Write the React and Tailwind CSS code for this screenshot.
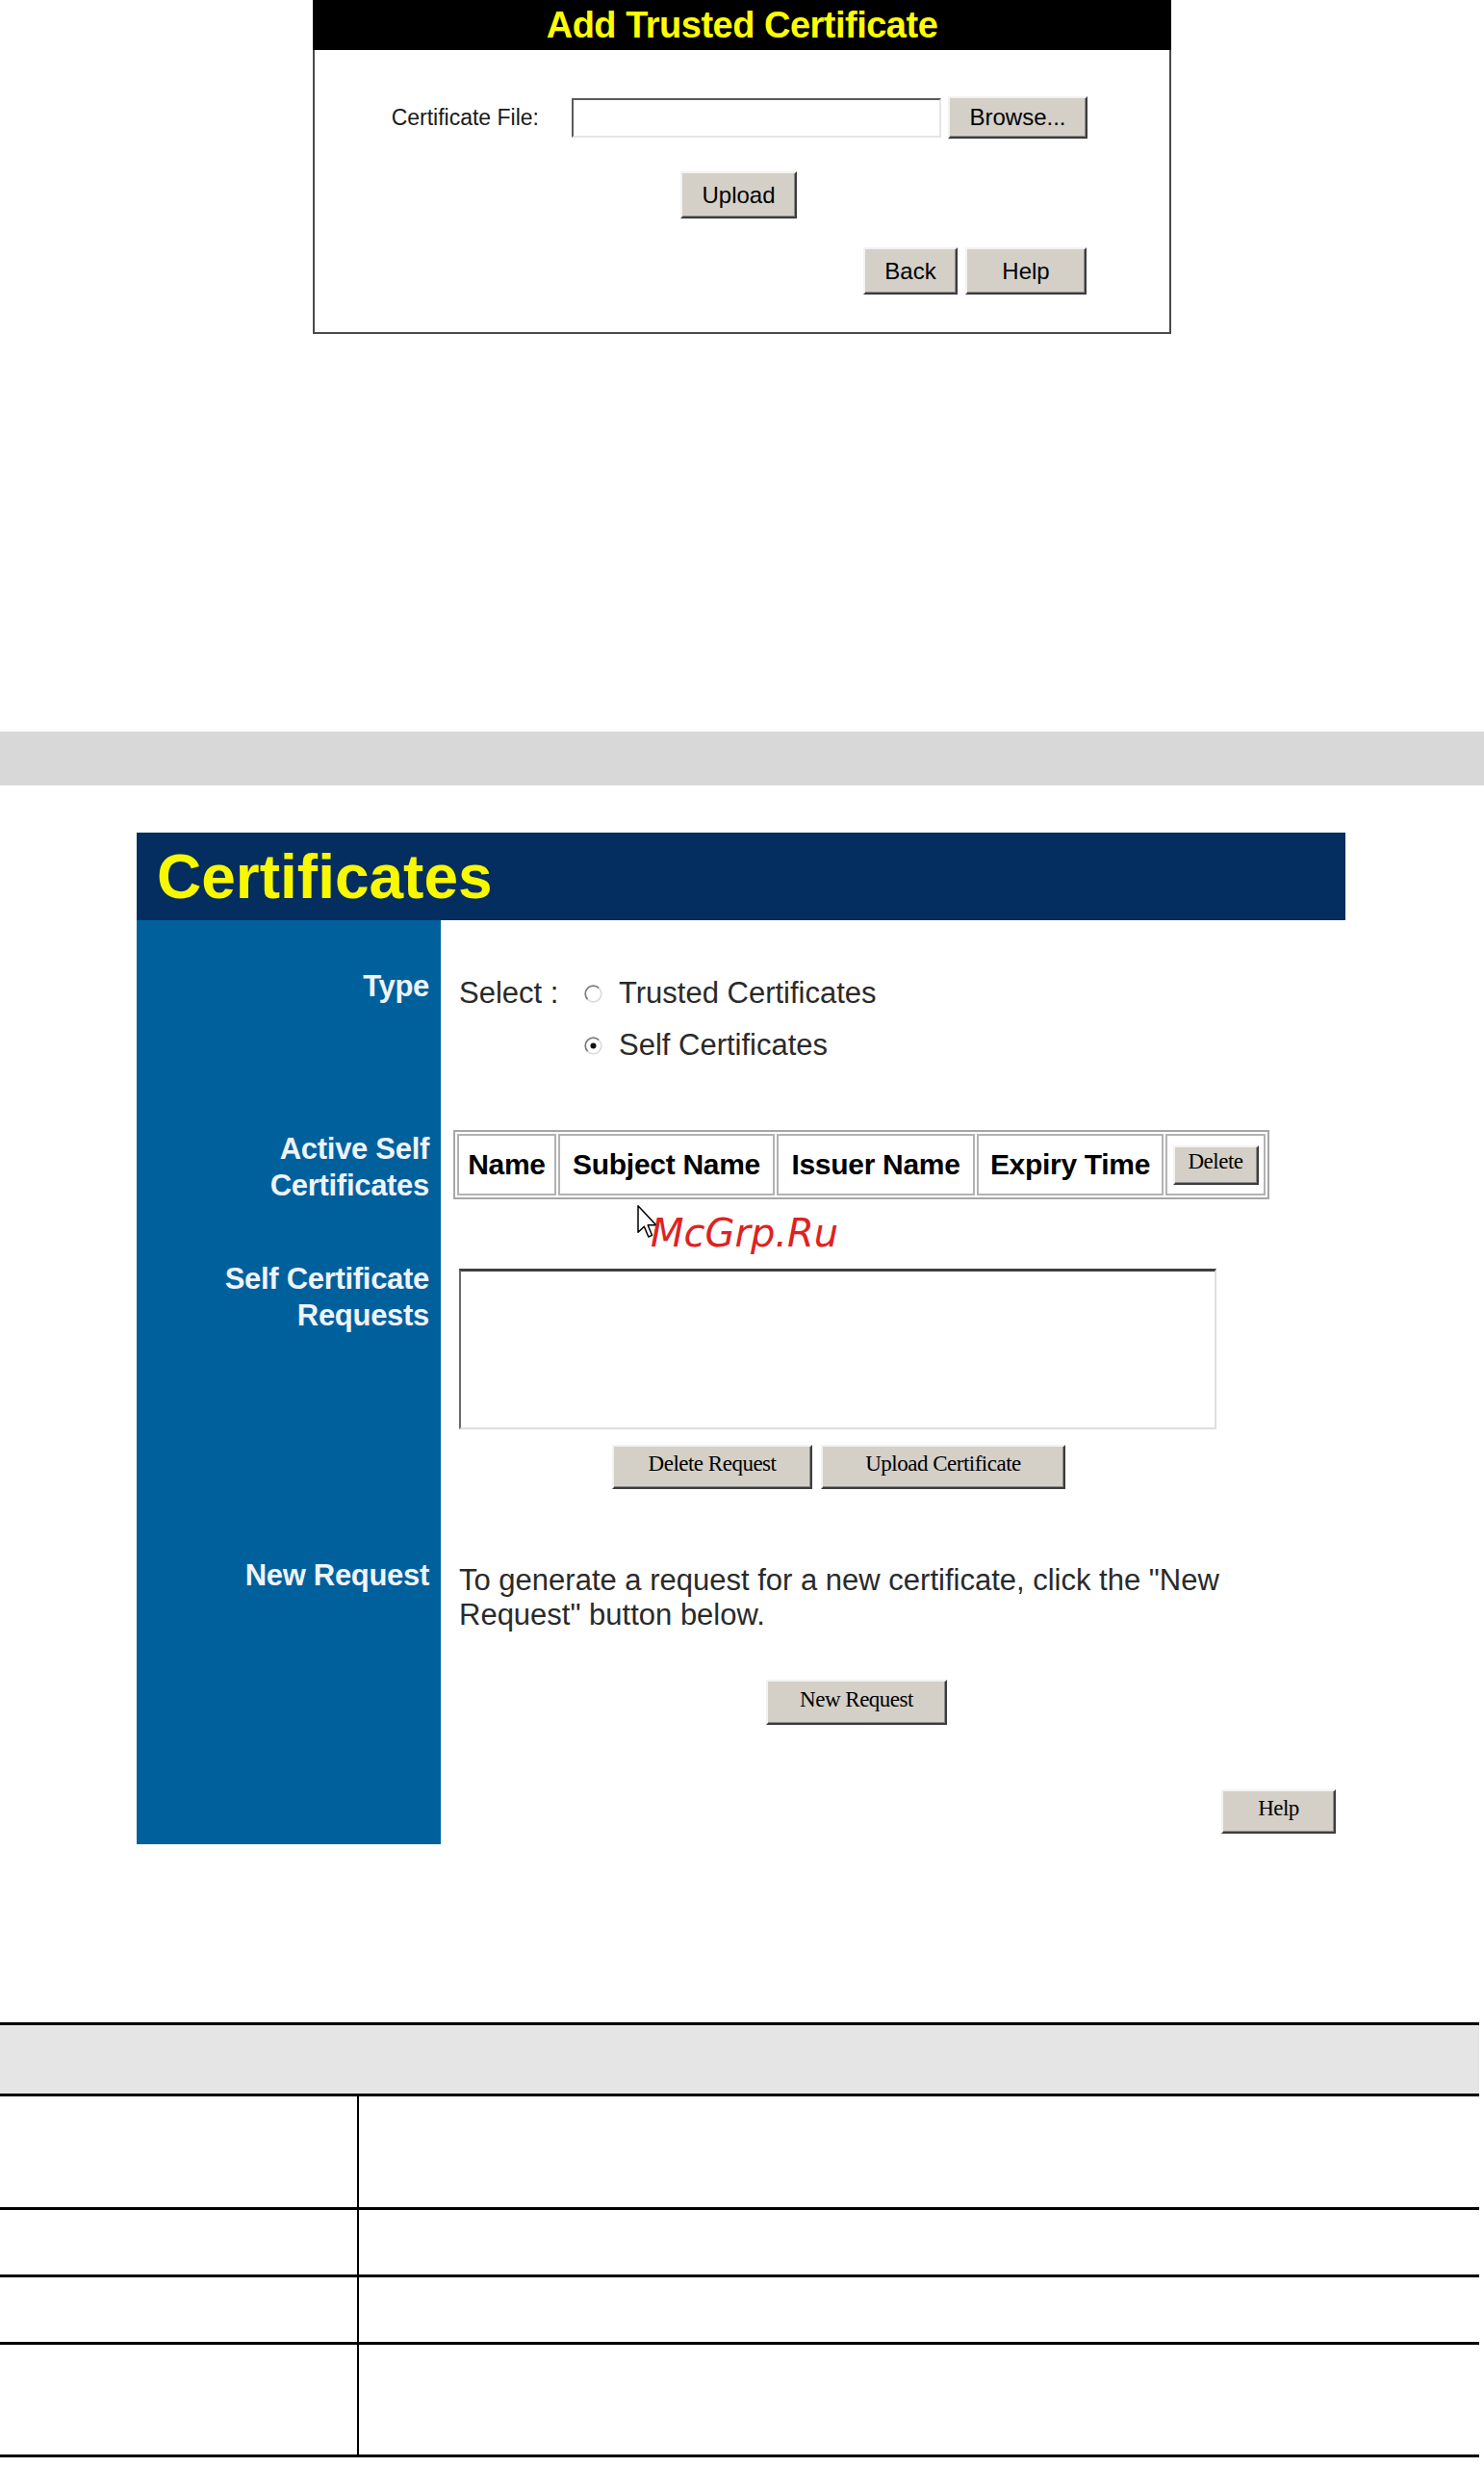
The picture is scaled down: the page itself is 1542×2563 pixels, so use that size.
import clsx from "clsx";

const sans = "font-['Liberation_Sans',Arial,sans-serif]";

function WinButton({ className, serif, children }) {
  return (
    <button
      type="button"
      className={clsx(
        "flex items-center justify-center bg-[#d4d0c8] text-black border-2 border-t-[#f2f2f2] border-l-[#f2f2f2] border-b-[#3c3c3c] border-r-[#3c3c3c] shadow-[inset_-1px_-1px_0_#8a8a8a]",
        serif
          ? "font-['Liberation_Serif','Times_New_Roman',serif] text-[23px] tracking-[-0.5px] pb-[6px]"
          : "font-['Liberation_Sans',Arial,sans-serif] text-[24px]",
        className
      )}
    >
      {children}
    </button>
  );
}

function Radio({ checked }) {
  return (
    <svg width="19" height="19" viewBox="0 0 12 12" className="shrink-0">
      <circle cx="6" cy="6" r="5.2" fill="#ffffff" />
      <path d="M9.7 2.3 A5.2 5.2 0 0 0 2.3 9.7" fill="none" stroke="#7c7c7c" strokeWidth="1.1" />
      <path d="M2.3 9.7 A5.2 5.2 0 0 0 9.7 2.3" fill="none" stroke="#dcdcdc" strokeWidth="1.1" />
      {checked && <circle cx="6" cy="6" r="1.9" fill="#111111" />}
    </svg>
  );
}

function Cursor() {
  return (
    <svg width="22" height="35" viewBox="0 0 13 21" className="absolute left-[520px] top-[387px]">
      <path
        d="M0.5 0.5 L0.5 17 L4.3 13.3 L7 19.8 L9.2 18.8 L6.6 12.5 L11.8 12.5 Z"
        fill="#ffffff"
        stroke="#000000"
        strokeWidth="0.9"
        strokeLinejoin="round"
      />
    </svg>
  );
}

function AddTrustedPanel() {
  return (
    <div className={clsx("mx-auto w-[892px]", sans)}>
      <div className="h-[52px] bg-black flex items-center justify-center">
        <span className="text-[38px] font-bold leading-none text-[#ffff00] tracking-[-0.5px]">
          Add Trusted Certificate
        </span>
      </div>
      <div className="border-x-2 border-b-2 border-[#4a4a4a] pt-[48px] pb-[39px]">
        <div className="flex items-center">
          <span className="w-[233px] text-right text-[23px] text-[#1a1a1a]">Certificate File:</span>
          <div className="ml-[34px] w-[384px] h-[41px] bg-white border-2 border-t-[#5a5a5a] border-l-[#5a5a5a] border-b-[#e6e6e6] border-r-[#e6e6e6]" />
          <WinButton className="ml-[7px] w-[145px] h-[44px]">Browse...</WinButton>
        </div>
        <WinButton className="mt-[34px] ml-[380px] w-[121px] h-[49px]">Upload</WinButton>
        <div className="mt-[30px] flex justify-end gap-[8px] pr-[86px]">
          <WinButton className="w-[98px] h-[49px]">Back</WinButton>
          <WinButton className="w-[126px] h-[49px]">Help</WinButton>
        </div>
      </div>
    </div>
  );
}

const headers = [
  { label: "Name", w: "w-[103px]" },
  { label: "Subject Name", w: "w-[225px]" },
  { label: "Issuer Name", w: "w-[206px]" },
  { label: "Expiry Time", w: "w-[194px]" },
];

function CertificatesPanel() {
  return (
    <div className={clsx("relative ml-[142px] w-[1256px]", sans)}>
      <div className="h-[91px] bg-[#032e5f] flex items-center pl-[21px]">
        <span className="text-[64px] font-bold leading-none text-[#f8f800]">Certificates</span>
      </div>
      <div className="flex">
        <div className="w-[316px] shrink-0 bg-[#00609c] flex flex-col items-end pr-[12px] text-right text-[31px] font-bold leading-[38px] text-[#eef3fa] tracking-[-0.3px]">
          <div className="mt-[50px]">Type</div>
          <div className="mt-[131px]">
            Active Self
            <br />
            Certificates
          </div>
          <div className="mt-[59px]">
            Self Certificate
            <br />
            Requests
          </div>
          <div className="mt-[232px]">New Request</div>
        </div>

        <div className="flex-1 flex flex-col items-start bg-white text-[31px] text-[#2a2a2a] leading-[38px]">
          <div className="mt-[57px] ml-[19px] flex items-center h-[38px]">
            <span className="w-[130px]">Select :</span>
            <Radio />
            <span className="ml-[17px]">Trusted Certificates</span>
          </div>
          <div className="mt-[16px] ml-[149px] flex items-center h-[38px]">
            <Radio checked />
            <span className="ml-[17px]">Self Certificates</span>
          </div>

          <table className="mt-[69px] ml-[13px] border-separate border-spacing-[2px] border-2 border-[#a6a6a6]">
            <tbody>
              <tr>
                {headers.map((h) => (
                  <td
                    key={h.label}
                    className={clsx(
                      "h-[64px] border-2 border-[#b2b2b2] text-center align-middle text-[30px] font-bold text-black tracking-[-0.3px] whitespace-nowrap",
                      h.w
                    )}
                  >
                    {h.label}
                  </td>
                ))}
                <td className="w-[104px] h-[64px] border-2 border-[#b2b2b2] align-middle">
                  <div className="flex justify-center">
                    <WinButton serif className="w-[89px] h-[41px]">Delete</WinButton>
                  </div>
                </td>
              </tr>
            </tbody>
          </table>

          <div className="mt-[72px] ml-[19px] w-[787px] h-[167px] bg-white border-2 border-t-[3px] border-t-[#404040] border-l-[#6a6a6a] border-b-[#dedede] border-r-[#dedede]" />

          <div className="mt-[16px] ml-[178px] flex gap-[9px]">
            <WinButton serif className="w-[208px] h-[46px]">Delete Request</WinButton>
            <WinButton serif className="w-[254px] h-[46px]">Upload Certificate</WinButton>
          </div>

          <p className="mt-[77px] ml-[19px] max-w-[820px] leading-[36px]">
            To generate a request for a new certificate, click the "New Request" button below.
          </p>

          <WinButton serif className="mt-[49px] ml-[338px] w-[188px] h-[47px]">New Request</WinButton>

          <WinButton serif className="mt-[67px] mb-[11px] mr-[10px] self-end w-[119px] h-[46px]">Help</WinButton>
        </div>
      </div>

      <Cursor />
      <span className="absolute left-[534px] top-[396px] font-['DejaVu_Sans',sans-serif] italic text-[40px] leading-none text-[#dd2222]">
        McGrp.Ru
      </span>
    </div>
  );
}

function DescriptionTable() {
  const rows = ["h-[118px]", "h-[70px]", "h-[70px]", "h-[117px]"];
  return (
    <div className="mt-[185px] w-[1537px]">
      <div className="h-[74px] border-t-[3px] border-black bg-[#e5e5e5]" />
      {rows.map((h, i) => (
        <div key={i} className={clsx("grid grid-cols-[373px_1fr] border-t-[3px] border-black", h)}>
          <div className="border-r-2 border-black" />
          <div />
        </div>
      ))}
      <div className="border-t-[3px] border-black" />
    </div>
  );
}

export default function App() {
  return (
    <div className="w-[1542px] h-[2563px] overflow-hidden bg-white">
      <AddTrustedPanel />
      <div className="mt-[413px] h-[56px] bg-[#d8d8d8]" />
      <div className="mt-[49px]">
        <CertificatesPanel />
      </div>
      <DescriptionTable />
    </div>
  );
}
